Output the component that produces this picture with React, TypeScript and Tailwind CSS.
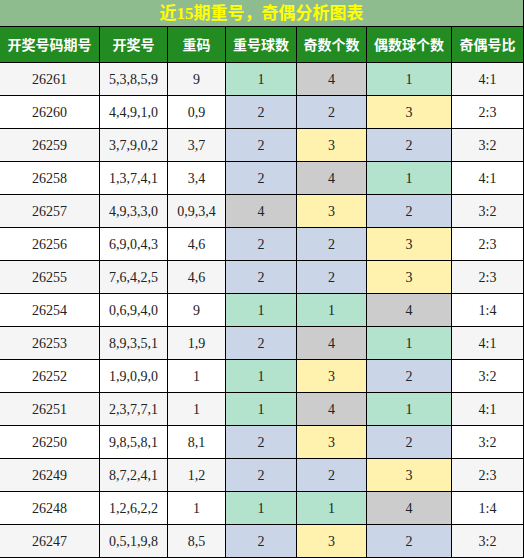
import React from "react";

const rows: [string, string, string, number, number, number, string][] = [
  ["26261", "5,3,8,5,9", "9", 1, 4, 1, "4:1"],
  ["26260", "4,4,9,1,0", "0,9", 2, 2, 3, "2:3"],
  ["26259", "3,7,9,0,2", "3,7", 2, 3, 2, "3:2"],
  ["26258", "1,3,7,4,1", "3,4", 2, 4, 1, "4:1"],
  ["26257", "4,9,3,3,0", "0,9,3,4", 4, 3, 2, "3:2"],
  ["26256", "6,9,0,4,3", "4,6", 2, 2, 3, "2:3"],
  ["26255", "7,6,4,2,5", "4,6", 2, 2, 3, "2:3"],
  ["26254", "0,6,9,4,0", "9", 1, 1, 4, "1:4"],
  ["26253", "8,9,3,5,1", "1,9", 2, 4, 1, "4:1"],
  ["26252", "1,9,0,9,0", "1", 1, 3, 2, "3:2"],
  ["26251", "2,3,7,7,1", "1", 1, 4, 1, "4:1"],
  ["26250", "9,8,5,8,1", "8,1", 2, 3, 2, "3:2"],
  ["26249", "8,7,2,4,1", "1,2", 2, 2, 3, "2:3"],
  ["26248", "1,2,6,2,2", "1", 1, 1, 4, "1:4"],
  ["26247", "0,5,1,9,8", "8,5", 2, 3, 2, "3:2"],
];

const widths = ["w-[100px]", "w-[68px]", "w-[58px]", "w-[71px]", "w-[70px]", "w-[85px]", "w-[72px]"];
const headers = ["开奖号码期号", "开奖号", "重码", "重号球数", "奇数个数", "偶数球个数", "奇偶号比"];

function colorFor(v: number) {
  if (v === 1) return "bg-[#b3e2cd]";
  if (v === 2) return "bg-[#cbd5e8]";
  if (v === 3) return "bg-[#fff2ae]";
  return "bg-[#cccccc]";
}

export default function App() {
  return (
    <div className="w-[524px] h-[558px] overflow-hidden bg-white">
      <div
        className="h-[27px] bg-[#8fbc8f] border-b border-r border-black flex items-center justify-center text-[17px] font-bold text-[#ffff00] leading-none"
        style={{ fontFamily: '"Liberation Serif", "Noto Sans CJK SC", serif' }}
      >
        近15期重号，奇偶分析图表
      </div>
      <div
        className="flex h-[36px] bg-[#228b22] border-b border-black text-white font-bold text-[14px]"
        style={{ fontFamily: '"Noto Sans CJK SC", sans-serif' }}
      >
        {headers.map((h, i) => (
          <div key={i} className={`${widths[i]} shrink-0 border-r border-black flex items-center justify-center`}>
            {h}
          </div>
        ))}
      </div>
      {rows.map((r, ri) => {
        const rowBg = ri % 2 === 0 ? "bg-[#f5f5f5]" : "bg-white";
        const cells = [
          { t: r[0], c: rowBg },
          { t: r[1], c: rowBg },
          { t: r[2], c: rowBg },
          { t: String(r[3]), c: colorFor(r[3]) },
          { t: String(r[4]), c: colorFor(r[4]) },
          { t: String(r[5]), c: colorFor(r[5]) },
          { t: r[6], c: rowBg },
        ];
        return (
          <div
            key={ri}
            className="flex h-[33px] border-b border-black text-[14px] text-[#222222]"
            style={{ fontFamily: '"Liberation Serif", serif' }}
          >
            {cells.map((c, ci) => (
              <div key={ci} className={`${widths[ci]} ${c.c} shrink-0 border-r border-black flex items-center justify-center`}>
                {c.t}
              </div>
            ))}
          </div>
        );
      })}
    </div>
  );
}
